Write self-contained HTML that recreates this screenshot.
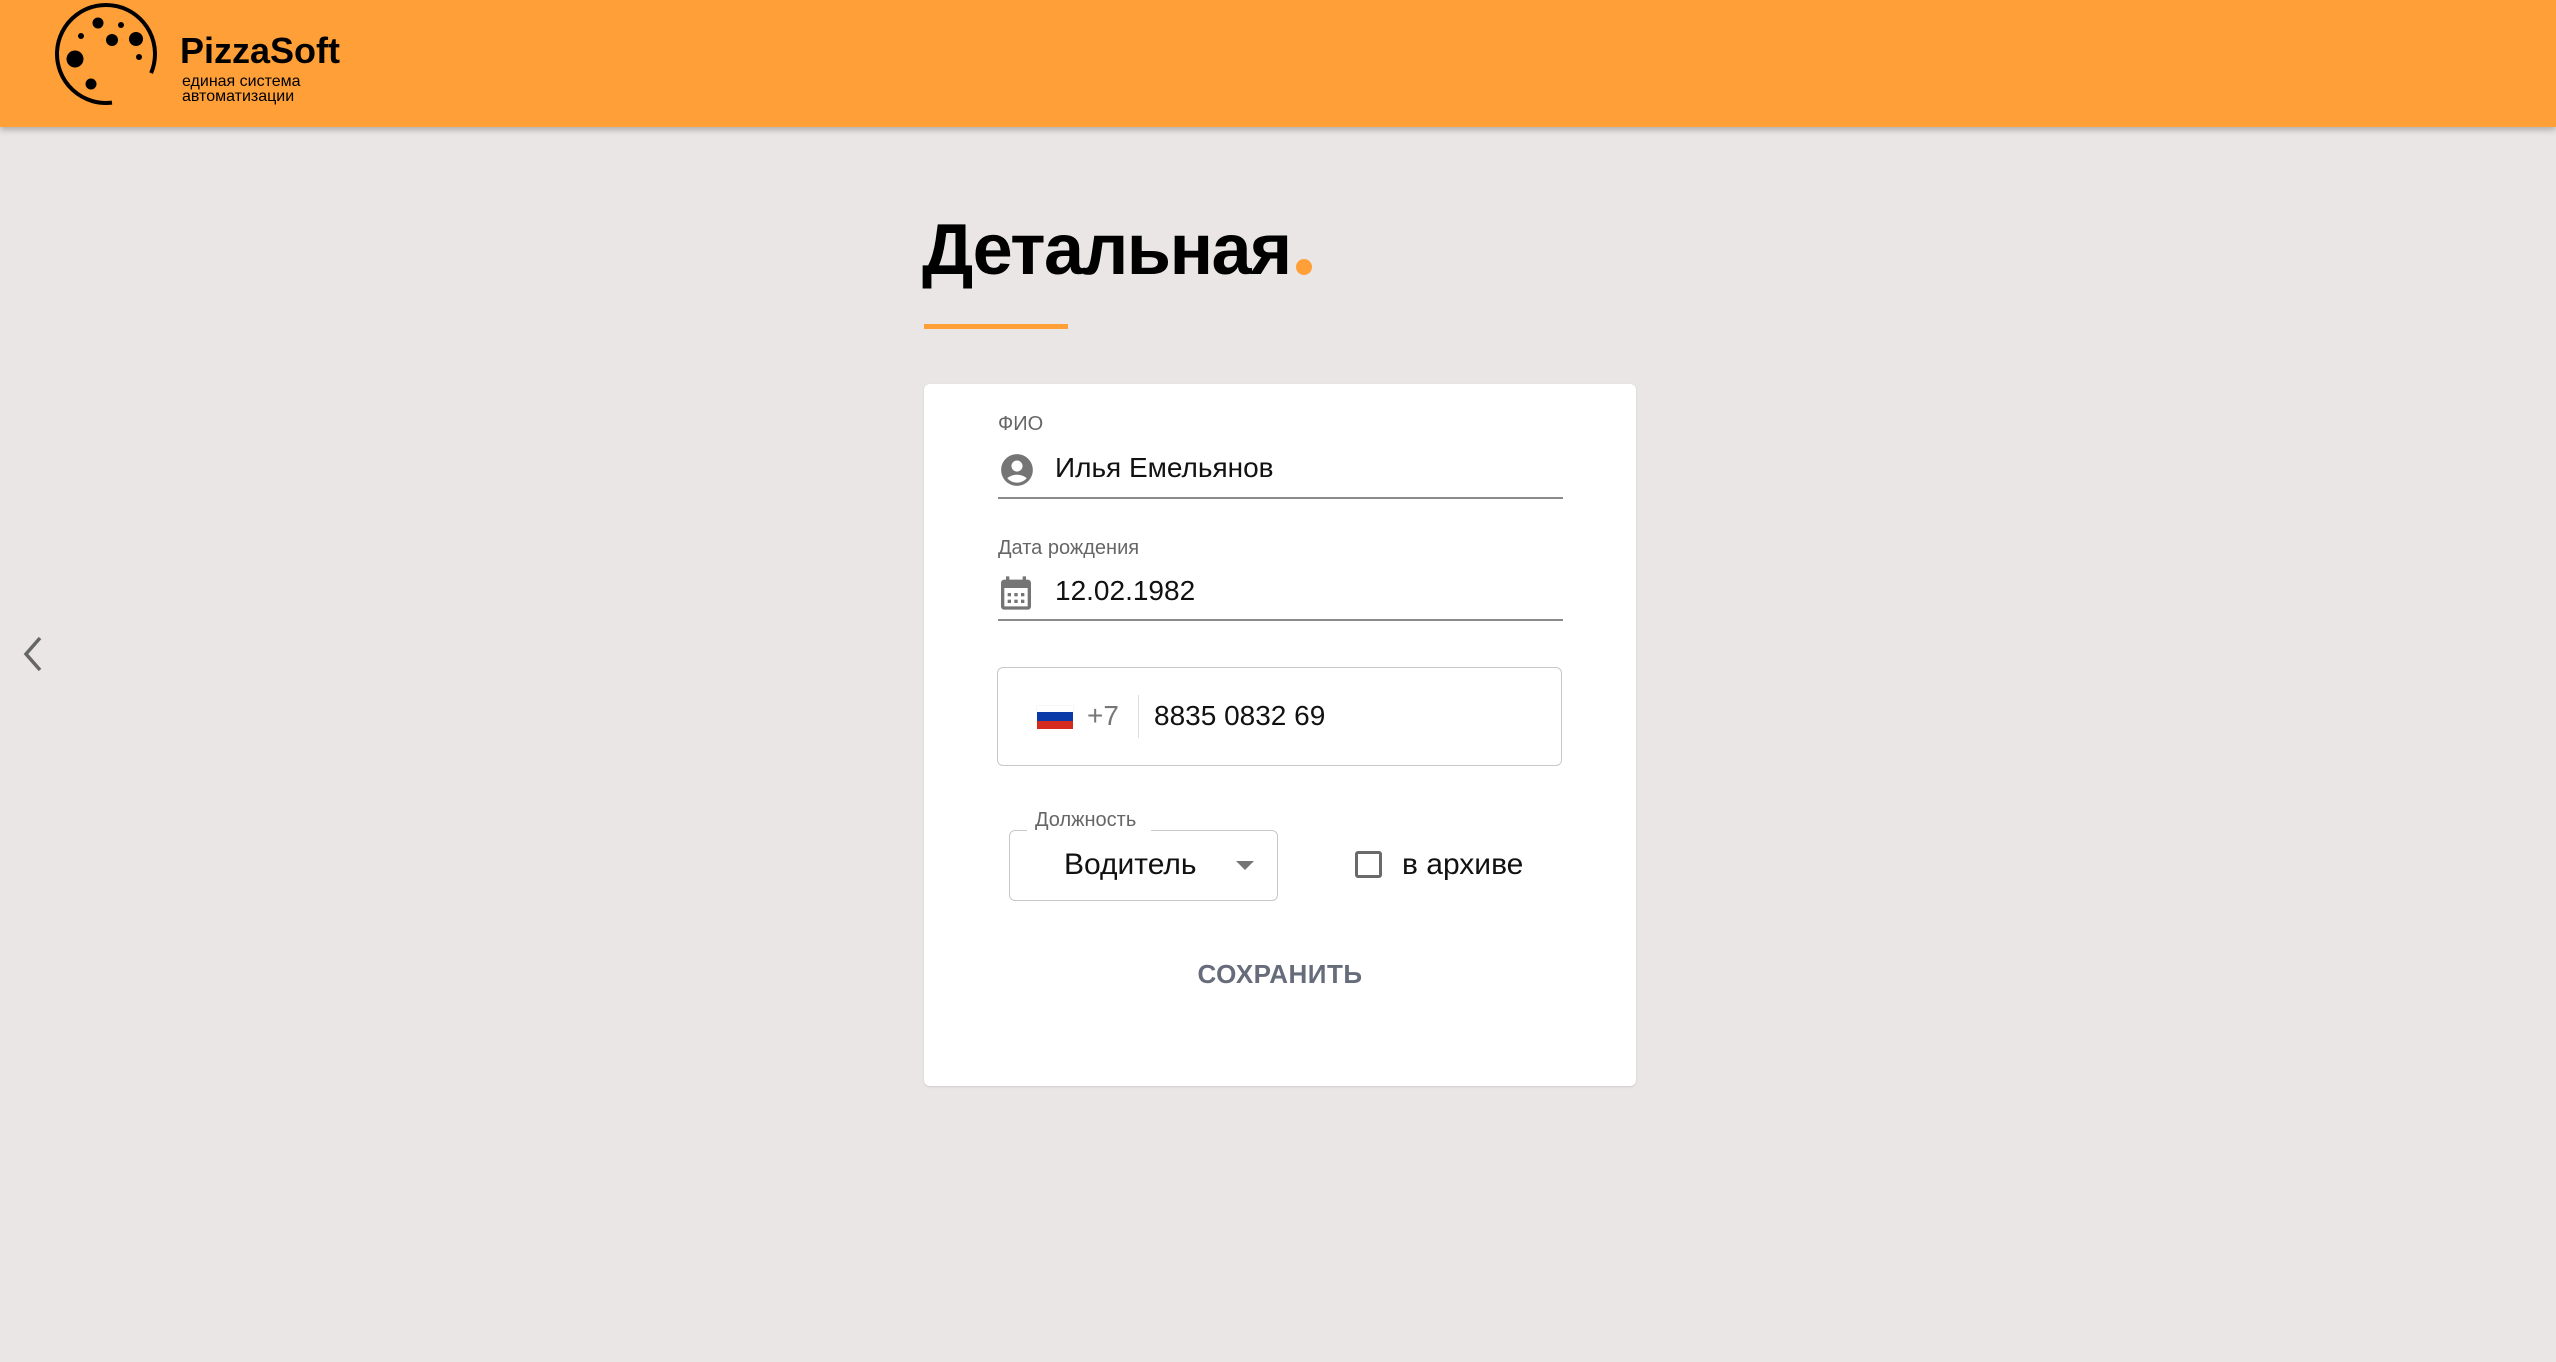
<!DOCTYPE html>
<html><head><meta charset="utf-8">
<style>
html,body{margin:0;padding:0}
body{width:2556px;height:1362px;background:#eae6e5;position:relative;overflow:hidden;font-family:"Liberation Sans","Noto Sans CJK SC",sans-serif}
.a{position:absolute;white-space:nowrap;line-height:1}
#hdr{position:absolute;left:0;top:0;width:2556px;height:127px;background:#ff9f38;box-shadow:0 3px 6px rgba(0,0,0,.25)}
#card{position:absolute;left:924px;top:384px;width:712px;height:702px;background:#fff;border-radius:6px;box-shadow:0 1px 2px rgba(0,0,0,.12)}
.lbl{color:#666;font-size:20px}
.val{color:#111;font-size:28px}
.ul{position:absolute;left:998px;width:565px;height:2px;background:#8a8a8a}
</style></head><body>
<div id="hdr">
<svg class="a" style="left:0;top:0" width="180" height="127" viewBox="0 0 180 127">
<path d="M112 102.6 A49 49 0 1 1 151.1 73.1" fill="none" stroke="#000" stroke-width="4"/>
<g fill="#000">
<circle cx="98" cy="23" r="5.5"/><circle cx="121" cy="25" r="3"/><circle cx="81" cy="36" r="3"/>
<circle cx="112" cy="40" r="6"/><circle cx="136" cy="39" r="7"/><circle cx="139" cy="57" r="3"/>
<circle cx="75" cy="59" r="8.5"/><circle cx="91" cy="84" r="5.5"/>
</g></svg>
<div class="a" style="left:180px;top:33px;font-size:36px;font-weight:bold;color:#000">PizzaSoft</div>
<div class="a" style="left:182px;top:74px;font-size:16px;color:#000">единая система</div>
<div class="a" style="left:182px;top:89px;font-size:16px;color:#000">автоматизации</div>
</div>

<svg class="a" style="left:18px;top:634px" width="30" height="40" viewBox="0 0 30 40"><path d="M22 4 L8 20 L22 36" fill="none" stroke="#666" stroke-width="3.5"/></svg>

<div class="a" style="left:922px;top:214px;font-size:72px;font-weight:900;color:#000;letter-spacing:-1.5px">Детальная</div>
<div class="a" style="left:1296px;top:259px;width:16px;height:16px;border-radius:50%;background:#ff9f38"></div>
<div class="a" style="left:924px;top:324px;width:144px;height:5px;background:#ff9f38"></div>

<div id="card"></div>
<div class="a lbl" style="left:998px;top:414px">ФИО</div>
<svg class="a" style="left:998px;top:451px" width="38" height="38" viewBox="0 0 24 24"><path fill="#757575" d="M12 2C6.48 2 2 6.48 2 12s4.480 10 10 10 10-4.48 10-10S17.52 2 12 2zm0 4c1.93 0 3.5 1.57 3.5 3.5S13.93 13 12 13s-3.5-1.57-3.5-3.5S10.07 6 12 6zm0 14c-2.03 0-4.43-.82-6.14-2.880C7.55 15.8 9.68 15 12 15s4.45.8 6.140 2.12C16.43 19.18 14.03 20 12 20z"/></svg>
<div class="a val" style="left:1055px;top:454px">Илья Емельянов</div>
<div class="ul" style="top:497px"></div>

<div class="a lbl" style="left:998px;top:538px">Дата рождения</div>
<svg class="a" style="left:996px;top:573px" width="40" height="40" viewBox="0 0 24 24"><path fill="#757575" d="M19 4h-1V2h-2v2H8V2H6v2H5c-1.11 0-2 .9-2 2v14c0 1.1.89 2 2 2h14c1.1 0 2-.9 2-2V6c0-1.1-.9-2-2-2zm0 16H5V9h14v11z"/><g fill="#757575"><rect x="7" y="12" width="2" height="2"/><rect x="11" y="12" width="2" height="2"/><rect x="15" y="12" width="2" height="2"/><rect x="7" y="16" width="2" height="2"/><rect x="11" y="16" width="2" height="2"/><rect x="15" y="16" width="2" height="2"/></g></svg>
<div class="a val" style="left:1055px;top:577px">12.02.1982</div>
<div class="ul" style="top:619px"></div>

<div class="a" style="left:997px;top:667px;width:563px;height:97px;border:1.5px solid #c8c8c8;border-radius:6px"></div>
<div class="a" style="left:1037px;top:706px;width:36px;height:6px;background:#fff;box-shadow:0 0 0 .5px #eee"></div>
<div class="a" style="left:1037px;top:712px;width:36px;height:9px;background:#0a3aa8"></div>
<div class="a" style="left:1037px;top:721px;width:36px;height:8px;background:#d52b1e"></div>
<div class="a" style="left:1087px;top:702px;font-size:28px;color:#777">+7</div>
<div class="a" style="left:1138px;top:695px;width:1px;height:43px;background:#ddd"></div>
<div class="a val" style="left:1154px;top:702px">8835 0832 69</div>

<div class="a" style="left:1009px;top:830px;width:267px;height:69px;border:1.5px solid #c8c8c8;border-radius:6px"></div>
<div class="a" style="left:1027px;top:820px;width:124px;height:14px;background:#fff"></div>
<div class="a lbl" style="left:1035px;top:810px">Должность</div>
<div class="a" style="left:1064px;top:850px;font-size:30px;color:#111">Водитель</div>
<svg class="a" style="left:1236px;top:861px" width="18" height="10" viewBox="0 0 18 10"><path d="M0 0 L18 0 L9 9 Z" fill="#757575"/></svg>

<div class="a" style="left:1355px;top:851px;width:21px;height:21px;border:3px solid #6a6a6a;border-radius:3px"></div>
<div class="a" style="left:1402px;top:850px;font-size:30px;color:#111">в архиве</div>

<div class="a" style="left:1080px;width:400px;text-align:center;top:961px;font-size:26px;font-weight:bold;color:#676c7a;letter-spacing:.5px">СОХРАНИТЬ</div>
</body></html>
